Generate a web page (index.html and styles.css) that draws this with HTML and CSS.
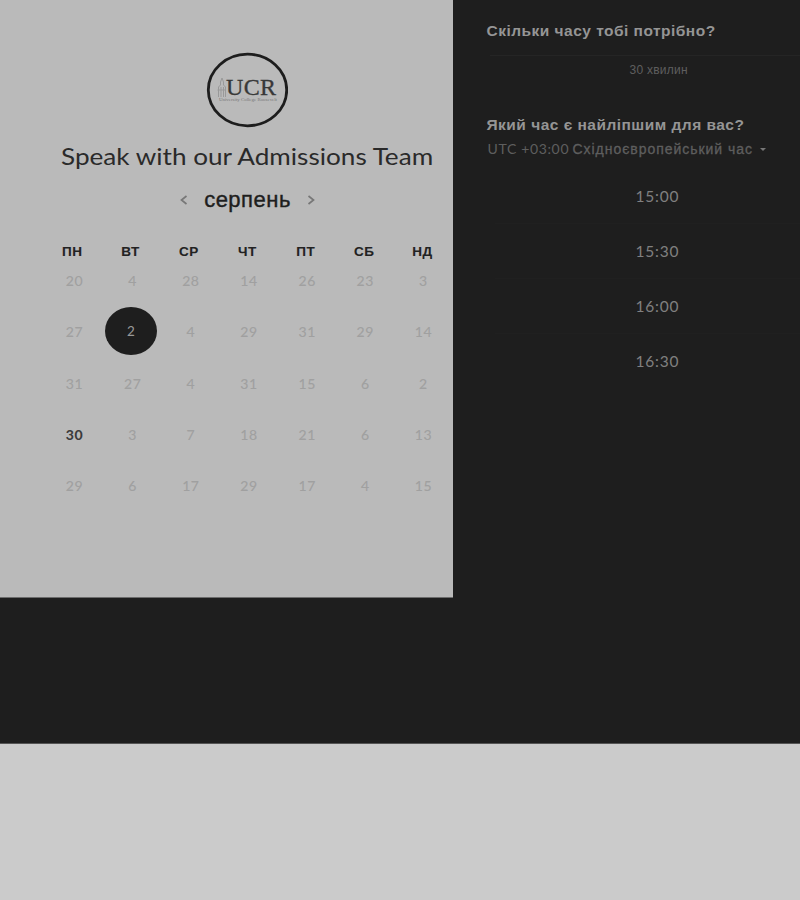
FILE: index.html
```html
<!DOCTYPE html>
<html lang="uk">
<head>
<meta charset="utf-8">
<title>Speak with our Admissions Team</title>
<link rel="stylesheet" href="styles.css">
</head>
<body>
<main class="booking">
  <section class="calendar">
    <svg class="logo" width="82" height="76" viewBox="0 0 82 76">
      <ellipse class="ring" cx="41.500" cy="38" rx="39.200" ry="35.800"/>
      <path class="tower" d="M12.500 45V35l2-2v-3l1.500-4 1.500 4v3l2 2v10M15 45V35M17.500 45V35M11.500 38h8"/>
      <text class="mark" x="20" y="43" textLength="50" lengthAdjust="spacing">UCR</text>
      <text class="college" x="13" y="49" textLength="58" lengthAdjust="spacingAndGlyphs">University College Roosevelt</text>
    </svg>
    <h1 class="title"><span>Speak with our Admissions Team</span></h1>
    <div class="month">
      <svg class="arrow" width="8" height="10" viewBox="0 0 8 10"><path d="M6.500 1 1.500 5l5 4"/></svg>
      <h2>серпень</h2>
      <svg class="arrow" width="8" height="10" viewBox="0 0 8 10"><path d="M1.500 1l5 4-5 4"/></svg>
    </div>
    <div class="week names"><span>ПН</span><span>ВТ</span><span>СР</span><span>ЧТ</span><span>ПТ</span><span>СБ</span><span>НД</span></div>
    <div class="days">
      <div class="week"><span>20</span><span>4</span><span>28</span><span>14</span><span>26</span><span>23</span><span>3</span></div>
      <div class="week"><span>27</span><span class="selected">2</span><span>4</span><span>29</span><span>31</span><span>29</span><span>14</span></div>
      <div class="week"><span>31</span><span>27</span><span>4</span><span>31</span><span>15</span><span>6</span><span>2</span></div>
      <div class="week"><span class="open">30</span><span>3</span><span>7</span><span>18</span><span>21</span><span>6</span><span>13</span></div>
      <div class="week"><span>29</span><span>6</span><span>17</span><span>29</span><span>17</span><span>4</span><span>15</span></div>
    </div>
  </section>
  <section class="times">
    <h3>Скільки часу тобі потрібно?</h3>
    <div class="duration">30 хвилин</div>
    <h3>Який час є найліпшим для вас?</h3>
    <div class="zone"><span class="utc">UTC +03:00</span><span class="place">Східноєвропейський час</span><i class="caret"></i></div>
    <ul class="slots"><li>15:00</li><li>15:30</li><li>16:00</li><li>16:30</li></ul>
  </section>
</main>
</body>
</html>
```
FILE: styles.css
```css
* { box-sizing: border-box; margin: 0; padding: 0; }
body { background: #cbcbcb; font-family: Lato, "Liberation Sans", sans-serif; }
.booking { display: flex; align-items: flex-start; width: 800px; height: 744px; background: #1e1e1e; border-bottom: 1px solid #555; }
.calendar { width: 453px; height: 598px; background: #bababa; padding-top: 52px; border-bottom: 1px solid #6c6c6c; }
.logo { display: block; margin-left: 206px; }
.ring { fill: none; stroke: #1d1d1d; stroke-width: 2.800; }
.tower { fill: none; stroke: #999; stroke-width: 1; }
.mark { font: 24px "Liberation Serif", serif; fill: #383838; stroke: #383838; stroke-width: .3; }
.college { font: 3.500px "Liberation Serif", serif; fill: #777; }
.title { height: 28px; margin: 14px 0 0 61px; font-weight: 400; font-size: 23px; line-height: 28px; color: #2a2a2a; white-space: nowrap; }
.title span { display: inline-block; transform: scaleX(1.136); transform-origin: left; }
.month { display: flex; align-items: center; justify-content: space-between; width: 136px; height: 28px; margin: 16px 0 0 179.500px; }
.month h2 { font: 400 22px/28px "Liberation Sans", sans-serif; letter-spacing: .5px; color: #1e1e1e; -webkit-text-stroke: .4px #1e1e1e; white-space: nowrap; }
.arrow { flex: none; fill: none; stroke: #777; stroke-width: 1.700; }
.week { display: grid; grid-template-columns: repeat(7, 58.150px); height: 51.300px; line-height: 20px; font-size: 14px; letter-spacing: .6px; color: #a0a0a0; text-align: center; -webkit-text-stroke: .1px; }
.names { margin: 28px 0 0 43px; grid-template-columns: repeat(7, 58.400px); height: 20px; font: 700 13.500px/20px "Liberation Sans", sans-serif; letter-spacing: .5px; color: #222; }
.days { margin: 9px 0 0 45.500px; }
.selected { width: 52px; height: 48px; margin: -15px 0 0 1.500px; border-radius: 50%; background: #1e1e1e; color: #999; font-size: 13.500px; line-height: 48px; -webkit-text-stroke: 0; }
.open { font-weight: 700; color: #3a3a3a; }
.times { flex: 1; padding: 20px 0 0 33.500px; }
.times h3 { font: 700 15.500px/22px "Liberation Sans", sans-serif; letter-spacing: .48px; color: #959595; white-space: nowrap; }
.duration { height: 59px; margin: 13px 0 0 3px; border-top: 1px solid #252525; font: 12px/20px "Liberation Sans", sans-serif; letter-spacing: .25px; color: #5e5e5e; padding: 4px 0 0 140px; }
.zone { display: flex; align-items: center; height: 26px; color: #5e5e5e; white-space: nowrap; padding-left: 1px; }
.utc { width: 85px; font-size: 14px; line-height: 18px; letter-spacing: .65px; padding-bottom: 1px; }
.place { width: 182px; font: 14px "Liberation Sans", sans-serif; letter-spacing: .96px; -webkit-text-stroke: .3px; }
.caret { margin-left: 5px; border: 3.500px solid transparent; border-top-color: #777; border-bottom: 0; }
.slots { list-style: none; margin: 7px 0 0 8px; }
.slots li { height: 55px; line-height: 55px; padding-left: 141px; font-size: 15.500px; letter-spacing: .8px; color: #808080; border-bottom: 1px solid #202020; }
.slots li:last-child { border: 0; }
```
